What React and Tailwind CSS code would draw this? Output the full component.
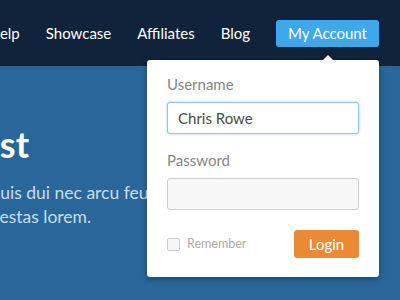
import React from "react";

export default function App() {
  const font = { fontFamily: "Lato, 'Open Sans', sans-serif" };
  return (
    <div className="relative w-[400px] h-[300px] overflow-hidden bg-[#29679a]" style={font}>
      <nav className="h-[66px] bg-[#10233a] flex items-center justify-end gap-[26px] pr-[21px] whitespace-nowrap text-[15px] text-white">
        <span>Help</span>
        <span>Showcase</span>
        <span>Affiliates</span>
        <span>Blog</span>
        <span className="h-[27px] px-[12px] rounded-[3px] bg-[#3da8ea] flex items-center">My Account</span>
      </nav>

      <main className="flex flex-col pt-[56px] whitespace-nowrap">
        <h1 className="ml-[-48px] text-[36px] leading-[44px] font-bold text-white">Host</h1>
        <p className="ml-[-9.5px] mt-[15px] text-[17.5px] leading-[24px] text-[#c9dcec]">
          quis dui nec arcu feugiat
          <br />
          gestas lorem.
        </p>
      </main>

      <div className="absolute left-[147px] top-[60px] w-[232px] rounded-[3px] bg-white shadow-[0_2px_6px_rgba(0,0,0,0.35)] pt-[14px] pb-[19px] px-[20px]">
        <div className="absolute top-[-5px] left-[176px] w-0 h-0 border-l-[5px] border-r-[5px] border-b-[5px] border-l-transparent border-r-transparent border-b-white" />
        <div className="text-[15px] leading-[20px] text-[#858585]">Username</div>
        <div className="mt-[8px] h-[32px] rounded-[3px] border border-[#8ec5ee] shadow-[0_0_3px_rgba(80,160,230,0.5)] bg-white flex items-center pl-[10px] text-[15px] text-[#4a4a4a]">
          Chris Rowe
        </div>
        <div className="mt-[16px] text-[15px] leading-[20px] text-[#858585]">Password</div>
        <div className="mt-[8px] h-[32px] rounded-[3px] border border-[#cccccc] bg-[#f7f7f7]" />
        <div className="mt-[20px] flex items-center justify-between">
          <div className="flex items-center gap-[7px]">
            <span className="w-[13px] h-[13px] rounded-[2px] border border-[#cccccc] bg-[#f6f6f6]" />
            <span className="text-[12.5px] text-[#ababab]">Remember</span>
          </div>
          <button className="h-[28px] w-[65px] rounded-[3px] bg-[#eb8935] text-white text-[15px]">Login</button>
        </div>
      </div>
    </div>
  );
}
